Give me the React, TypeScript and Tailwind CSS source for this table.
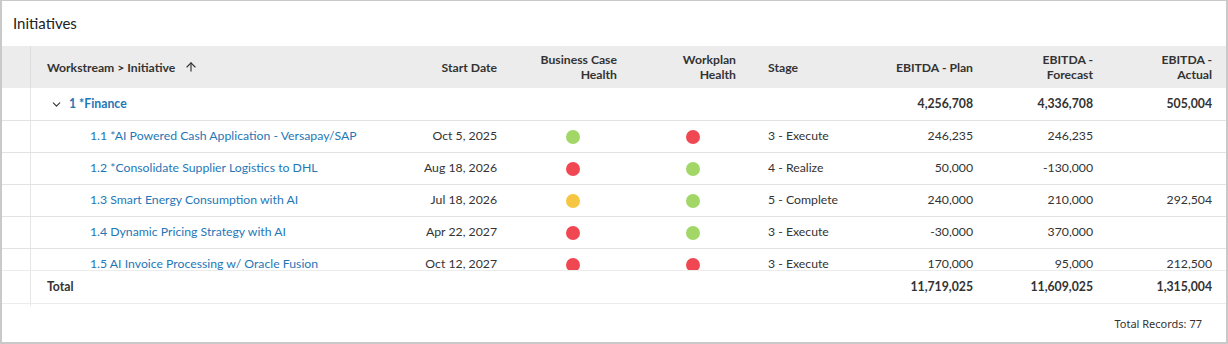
import { ArrowUp, ChevronDown } from "lucide-react";

type Health = "green" | "red" | "yellow";

const rows: {
  name: string;
  start: string;
  bc: Health;
  wp: Health;
  stage: string;
  plan: string;
  forecast: string;
  actual: string;
}[] = [
  { name: "1.1 *AI Powered Cash Application - Versapay/SAP", start: "Oct 5, 2025", bc: "green", wp: "red", stage: "3 - Execute", plan: "246,235", forecast: "246,235", actual: "" },
  { name: "1.2 *Consolidate Supplier Logistics to DHL", start: "Aug 18, 2026", bc: "red", wp: "green", stage: "4 - Realize", plan: "50,000", forecast: "-130,000", actual: "" },
  { name: "1.3 Smart Energy Consumption with AI", start: "Jul 18, 2026", bc: "yellow", wp: "green", stage: "5 - Complete", plan: "240,000", forecast: "210,000", actual: "292,504" },
  { name: "1.4 Dynamic Pricing Strategy with AI", start: "Apr 22, 2027", bc: "red", wp: "green", stage: "3 - Execute", plan: "-30,000", forecast: "370,000", actual: "" },
  { name: "1.5 AI Invoice Processing w/ Oracle Fusion", start: "Oct 12, 2027", bc: "red", wp: "red", stage: "3 - Execute", plan: "170,000", forecast: "95,000", actual: "212,500" },
];

const grid = "grid grid-cols-[29px_362px_120px_120px_119px_117px_120px_120px_1fr]";

const dotColor: Record<Health, string> = {
  green: "bg-[#a2d767]",
  red: "bg-[#ef4853]",
  yellow: "bg-[#f6c643]",
};

const Dot = ({ h }: { h: Health }) => (
  <div className="flex items-center justify-center">
    <span className={`block h-[14px] w-[14px] rounded-full ${dotColor[h]}`} />
  </div>
);

export default function App() {
  return (
    <div
      className="h-[344px] w-[1228px] bg-white text-[#333] border-2 border-t border-[#c9c9c9] flex flex-col"
      style={{ fontFamily: "Lato, 'Noto Sans', sans-serif" }}
    >
      <div className="h-[45px] flex items-center pl-[11px] text-[15px] text-[#222]">Initiatives</div>

      {/* header */}
      <div className={`${grid} h-[42px] bg-[#ececec] text-[12.2px] font-bold text-[#333] leading-[15px]`}>
        <div className="border-r border-[#dedede]" />
        <div className="flex items-center gap-[9px] pl-4">
          Workstream &gt; Initiative
          <ArrowUp size={14} strokeWidth={2} />
        </div>
        <div className="flex items-center justify-end pr-4">Start Date</div>
        <div className="flex items-center justify-end pr-4 text-right">Business Case<br />Health</div>
        <div className="flex items-center justify-end pr-4 text-right">Workplan<br />Health</div>
        <div className="flex items-center pl-4">Stage</div>
        <div className="flex items-center justify-end pr-4">EBITDA - Plan</div>
        <div className="flex items-center justify-end pr-4 text-right">EBITDA -<br />Forecast</div>
        <div className="flex items-center justify-end pr-[14px] text-right">EBITDA -<br />Actual</div>
      </div>

      {/* body */}
      <div className="relative h-[218px] overflow-hidden text-[12.25px]">
        <div className={`${grid} h-[33px] border-b border-[#e2e2e2] font-bold`}>
          <div className="border-r border-[#e6e6e6]" />
          <div className="flex items-center pl-[19px] gap-[6px] text-[#1f77b6]">
            <ChevronDown size={13} strokeWidth={2} className="text-[#333]" />
            1 *Finance
          </div>
          <div />
          <div />
          <div />
          <div />
          <div className="flex items-center justify-end pr-4">4,256,708</div>
          <div className="flex items-center justify-end pr-4">4,336,708</div>
          <div className="flex items-center justify-end pr-[14px]">505,004</div>
        </div>

        {rows.map((r) => (
          <div key={r.name} className={`${grid} h-[32px] border-b border-[#e2e2e2]`}>
            <div className="border-r border-[#e6e6e6]" />
            <div className="flex items-center pl-[59px] text-[#1f77b6] whitespace-nowrap">{r.name}</div>
            <div className="flex items-center justify-end pr-4">{r.start}</div>
            <Dot h={r.bc} />
            <Dot h={r.wp} />
            <div className="flex items-center pl-4">{r.stage}</div>
            <div className="flex items-center justify-end pr-4">{r.plan}</div>
            <div className="flex items-center justify-end pr-4">{r.forecast}</div>
            <div className="flex items-center justify-end pr-[14px]">{r.actual}</div>
          </div>
        ))}

        {/* next row, mostly hidden behind the sticky total */}
        <div className={`${grid} h-[32px]`}>
          <div className="border-r border-[#e6e6e6]" />
          <div />
          <div />
          <Dot h="red" />
          <Dot h="red" />
        </div>

        {/* sticky total */}
        <div className={`${grid} absolute left-0 right-0 top-[182px] h-[34px] bg-white border-t border-b border-[#ececec] font-bold`}>
          <div className="border-r border-[#e6e6e6]" />
          <div className="flex items-center pl-4">Total</div>
          <div />
          <div />
          <div />
          <div />
          <div className="flex items-center justify-end pr-4">11,719,025</div>
          <div className="flex items-center justify-end pr-4">11,609,025</div>
          <div className="flex items-center justify-end pr-[14px]">1,315,004</div>
        </div>
      </div>

      <div className="flex-1 flex items-center justify-end pr-[24px] text-[11px] text-[#333]" style={{ fontFamily: "'Noto Sans', sans-serif" }}>
        Total Records: 77
      </div>
    </div>
  );
}
